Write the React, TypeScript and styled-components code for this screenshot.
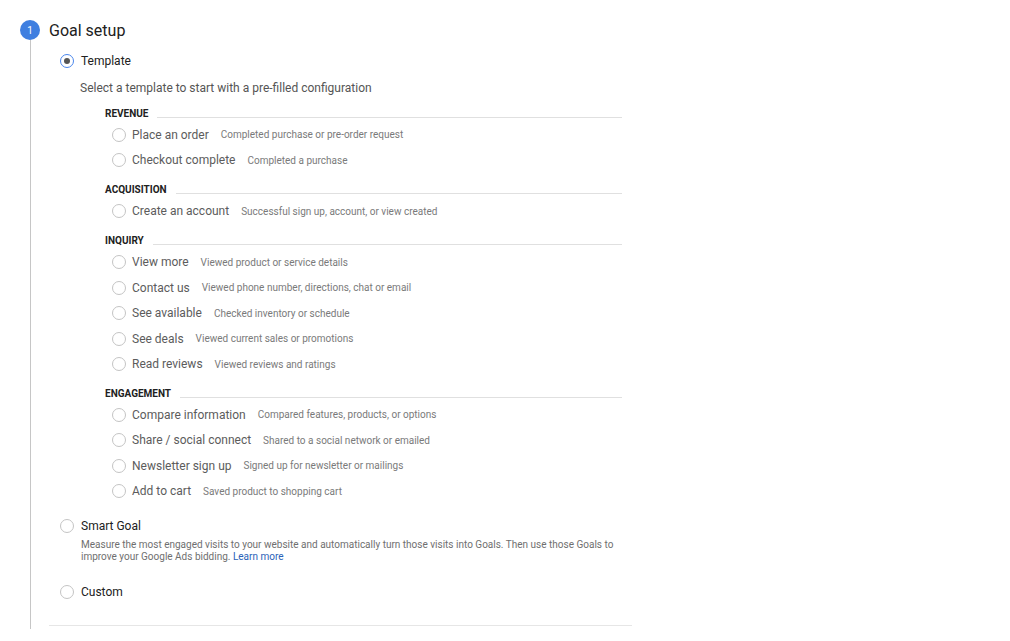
import React from 'react';
import styled, { createGlobalStyle } from 'styled-components';

const GlobalStyle = createGlobalStyle`
  html, body {
    margin: 0;
    padding: 0;
    background: #ffffff;
  }
  body {
    font-family: Roboto, "Liberation Sans", Arial, sans-serif;
    color: #212121;
    -webkit-font-smoothing: antialiased;
  }
`;

const Page = styled.div`
  width: 1010px;
  height: 641px;
  padding: 20px 0 0 20px;
  box-sizing: border-box;
  overflow: hidden;
`;

const StepHeader = styled.div`
  display: flex;
  align-items: center;
  gap: 9px;
  height: 20px;
`;

const StepNumber = styled.div`
  width: 20px;
  height: 20px;
  border-radius: 50%;
  background: #3f7fe0;
  color: #ffffff;
  font-size: 10px;
  display: flex;
  align-items: center;
  justify-content: center;
`;

const StepTitle = styled.h2`
  margin: 0;
  padding-top: 2px;
  font-size: 16px;
  font-weight: 400;
  color: #212121;
  line-height: 20px;
`;

const StepBody = styled.div`
  margin-left: 10px;
  border-left: 1px solid #c6c6c6;
  padding: 11px 0 3px 18px;
  width: 583px;
`;

const OptionRow = styled.label<{ $gapTop?: number }>`
  display: flex;
  align-items: center;
  gap: 7px;
  height: 20px;
  padding-left: 11px;
  margin-top: ${(p) => p.$gapTop ?? 0}px;
  font-size: 12px;
  color: #212121;
`;

const Radio = styled.span<{ $checked?: boolean }>`
  width: 14px;
  height: 14px;
  box-sizing: border-box;
  border-radius: 50%;
  border: 1px solid ${(p) => (p.$checked ? '#4a86ec' : '#c4c4c4')};
  display: flex;
  align-items: center;
  justify-content: center;
  flex-shrink: 0;
  background: #ffffff;

  &::after {
    content: '';
    display: ${(p) => (p.$checked ? 'block' : 'none')};
    width: 6px;
    height: 6px;
    border-radius: 50%;
    background: #555555;
  }
`;

const Helper = styled.p`
  margin: 9px 0 0 31px;
  font-size: 12px;
  line-height: 16px;
  color: #555555;
`;

const Sections = styled.div`
  margin-left: 56px;
  padding-top: 11px;
  display: flex;
  flex-direction: column;
  gap: 10.4px;
  width: 517px;
`;

const SectionHead = styled.div`
  display: flex;
  align-items: flex-end;
  gap: 9px;
  height: 14px;
  margin-bottom: 1px;
`;

const SectionTitle = styled.span`
  font-size: 10px;
  font-weight: 700;
  line-height: 14px;
  color: #212121;
`;

const Rule = styled.span`
  flex: 1;
  height: 1px;
  background: #e0e0e0;
  margin-bottom: 3px;
`;

const TemplateRow = styled.label`
  display: flex;
  align-items: center;
  height: 25.5px;
  padding-left: 7px;
`;

const RowLabel = styled.span`
  margin-left: 6px;
  font-size: 12px;
  color: #5c5c5c;
`;

const RowDesc = styled.span`
  margin-left: 12px;
  font-size: 10px;
  color: #7a7a7a;
`;

const SmartDesc = styled.p`
  margin: 3px 0 0 32px;
  font-size: 10px;
  line-height: 12px;
  color: #6f6f6f;
  max-width: 548px;
`;

const Link = styled.a`
  color: #2a62b8;
  text-decoration: none;
`;

const Divider = styled.div`
  margin-top: 23px;
  height: 1px;
  background: #e6e6e6;
`;

type Template = { label: string; desc: string };
type Group = { title: string; items: Template[] };

const groups: Group[] = [
  {
    title: 'REVENUE',
    items: [
      { label: 'Place an order', desc: 'Completed purchase or pre-order request' },
      { label: 'Checkout complete', desc: 'Completed a purchase' },
    ],
  },
  {
    title: 'ACQUISITION',
    items: [{ label: 'Create an account', desc: 'Successful sign up, account, or view created' }],
  },
  {
    title: 'INQUIRY',
    items: [
      { label: 'View more', desc: 'Viewed product or service details' },
      { label: 'Contact us', desc: 'Viewed phone number, directions, chat or email' },
      { label: 'See available', desc: 'Checked inventory or schedule' },
      { label: 'See deals', desc: 'Viewed current sales or promotions' },
      { label: 'Read reviews', desc: 'Viewed reviews and ratings' },
    ],
  },
  {
    title: 'ENGAGEMENT',
    items: [
      { label: 'Compare information', desc: 'Compared features, products, or options' },
      { label: 'Share / social connect', desc: 'Shared to a social network or emailed' },
      { label: 'Newsletter sign up', desc: 'Signed up for newsletter or mailings' },
      { label: 'Add to cart', desc: 'Saved product to shopping cart' },
    ],
  },
];

const App: React.FC = () => {
  return (
    <>
      <GlobalStyle />
      <Page>
        <StepHeader>
          <StepNumber>1</StepNumber>
          <StepTitle>Goal setup</StepTitle>
        </StepHeader>
        <StepBody>
          <OptionRow>
            <Radio $checked />
            Template
          </OptionRow>
          <Helper>Select a template to start with a pre-filled configuration</Helper>
          <Sections>
            {groups.map((g) => (
              <div key={g.title}>
                <SectionHead>
                  <SectionTitle>{g.title}</SectionTitle>
                  <Rule />
                </SectionHead>
                {g.items.map((t) => (
                  <TemplateRow key={t.label}>
                    <Radio />
                    <RowLabel>{t.label}</RowLabel>
                    <RowDesc>{t.desc}</RowDesc>
                  </TemplateRow>
                ))}
              </div>
            ))}
          </Sections>
          <OptionRow $gapTop={12}>
            <Radio />
            Smart Goal
          </OptionRow>
          <SmartDesc>
            Measure the most engaged visits to your website and automatically turn those visits into
            Goals. Then use those Goals to improve your Google Ads bidding. <Link href="#">Learn more</Link>
          </SmartDesc>
          <OptionRow $gapTop={19}>
            <Radio />
            Custom
          </OptionRow>
          <Divider />
        </StepBody>
      </Page>
    </>
  );
};

export default App;
